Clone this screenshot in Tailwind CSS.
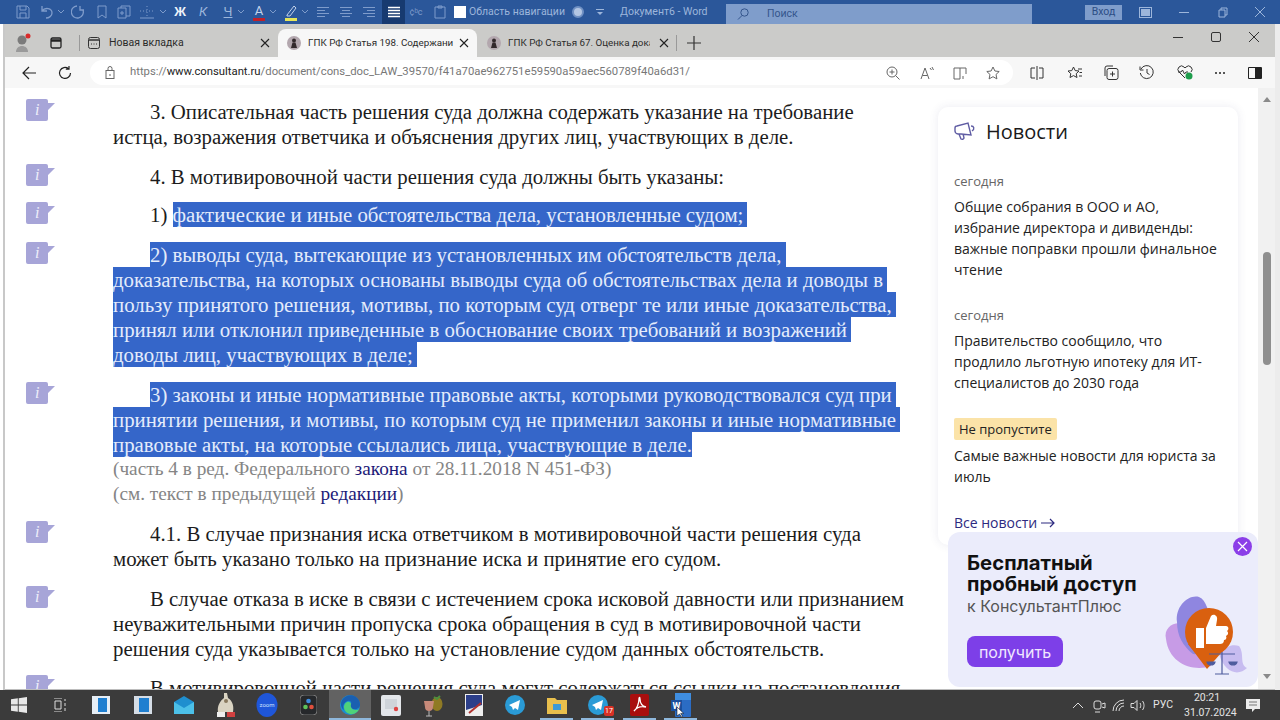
<!DOCTYPE html>
<html lang="ru">
<head>
  <meta charset="UTF-8" />
  <title>ГПК РФ Статья 198</title>
  <script src="https://cdn.jsdelivr.net/npm/@tailwindcss/browser@4"></script>
</head>
<body class="w-[1280px] h-[720px] overflow-hidden bg-[#f0f0f0] flex flex-col font-['Roboto',sans-serif]">

  <!-- Word title bar -->
  <div class="h-[24px] bg-[#2b579a] flex items-center text-[#9db6db] shrink-0 text-[10.5px] whitespace-nowrap">
    <svg class="ml-[16px]" width="14" height="14" viewBox="0 0 14 14" fill="none" stroke="#7f9ccb"><path d="M1 1h10l2 2v10H1zM4 1v4h6V1M4 13V8h6v5"/></svg>
    <svg class="ml-[10px]" width="14" height="14" viewBox="0 0 14 14" fill="none" stroke="#7f9ccb" stroke-width="1.3"><path d="M2 1v5h5M2 6c3-4 10-3 10 2 0 3-3 5-6 5"/></svg>
    <svg class="ml-[4px]" width="6" height="4" viewBox="0 0 6 4" fill="none" stroke="#7f9ccb"><path d="M0 0l3 3 3-3"/></svg>
    <svg class="ml-[7px]" width="14" height="14" viewBox="0 0 14 14" fill="none" stroke="#7f9ccb" stroke-width="1.3"><path d="M9 1v4h4M12 5A6 6 0 1 1 6 1"/></svg>
    <svg class="ml-[12px]" width="10" height="14" viewBox="0 0 10 14" fill="none" stroke="#7f9ccb"><path d="M1 1h8v12l-4-3-4 3z"/></svg>
    <svg class="ml-[10px]" width="14" height="14" viewBox="0 0 14 14" fill="none" stroke="#7f9ccb"><path d="M1 3h8v10H1zM4 3V1h9v10H9M3 8h4M5 6v4"/></svg>
    <svg class="ml-[8px]" width="16" height="14" viewBox="0 0 16 14" fill="none" stroke="#7f9ccb" stroke-dasharray="1 2"><path d="M1 6h14M8 1v10"/><path d="M1 13h14" stroke-dasharray="none"/></svg>
    <svg class="ml-[5px]" width="6" height="4" viewBox="0 0 6 4" fill="none" stroke="#7f9ccb"><path d="M0 0l3 3 3-3"/></svg>
    <span class="ml-[8px] w-[12px] text-center font-bold text-[#eef3fa] text-[13px] font-['Liberation_Sans',sans-serif]">Ж</span>
    <span class="ml-[12px] w-[10px] text-center italic text-[13px] text-[#9db6db]">К</span>
    <span class="ml-[15px] w-[10px] text-center underline text-[13px] text-[#9db6db]">Ч</span>
    <svg class="ml-[5px]" width="6" height="4" viewBox="0 0 6 4" fill="none" stroke="#7f9ccb"><path d="M0 0l3 3 3-3"/></svg>
    <span class="ml-[9px] w-[12px] h-[17px] text-center text-[13px] leading-[14px] text-[#c4d3ea] border-b-[3px] border-[#c0202a]">А</span>
    <svg class="ml-[5px]" width="6" height="4" viewBox="0 0 6 4" fill="none" stroke="#7f9ccb"><path d="M0 0l3 3 3-3"/></svg>
    <svg class="ml-[8px]" width="14" height="17" viewBox="0 0 14 17" fill="none"><path d="M3 11 10 2l2 2-6 8H3z" stroke="#c4d3ea"/><path d="M1 14h12v3H1z" fill="#e6e65a"/></svg>
    <svg class="ml-[4px]" width="6" height="4" viewBox="0 0 6 4" fill="none" stroke="#7f9ccb"><path d="M0 0l3 3 3-3"/></svg>
    <svg class="ml-[9px]" width="12" height="12" viewBox="0 0 12 12" stroke="#7f9ccb"><path d="M0 1.5h12M0 4.5h8M0 7.5h12M0 10.5h8"/></svg>
    <svg class="ml-[11px]" width="12" height="12" viewBox="0 0 12 12" stroke="#7f9ccb"><path d="M0 1.5h12M2 4.5h8M0 7.5h12M2 10.5h8"/></svg>
    <svg class="ml-[11px]" width="12" height="12" viewBox="0 0 12 12" stroke="#7f9ccb"><path d="M0 1.5h12M4 4.5h8M0 7.5h12M4 10.5h8"/></svg>
    <div class="ml-[7px] w-[23px] h-[24px] bg-[#173a70] flex items-center justify-center">
      <svg width="12" height="12" viewBox="0 0 12 12" stroke="#fff" stroke-width="1.3"><path d="M0 1.5h12M0 4.5h12M0 7.5h12M0 10.5h12"/></svg>
    </div>
    <span class="ml-[4px] w-[14px] text-[9px] leading-[8px] text-[#7f9ccb] text-center">¢ᵇc</span>
    <svg class="ml-[11px]" width="12" height="14" viewBox="0 0 12 14" fill="none" stroke="#7f9ccb"><path d="M1 2h10v11H1zM4 1h4v2H4z"/></svg>
    <span class="ml-[8px] w-[12px] h-[12px] bg-white"></span>
    <span class="ml-[3px] w-[90px] text-[#9db6db]">Область навигации</span>
    <span class="ml-[13px] w-[12px] h-[12px] rounded-full bg-[#b3c6e3] border-[2px] border-[#6f90c3]"></span>
    <span class="ml-[12px] w-[8px] h-[6px] border-t border-[#9db6db] flex justify-center pt-[2px]"><svg width="6" height="3" viewBox="0 0 6 3" fill="#9db6db"><path d="M0 0h6L3 3z"/></svg></span>
    <span class="ml-[16px] w-[89px]">Документ6 - Word</span>
    <div class="ml-[17px] w-[306px] h-[20px] mt-[4px] bg-[#7f9dcb] flex items-center pl-[11px] gap-[18px] text-[#34558c]">
      <svg width="12" height="12" viewBox="0 0 12 12" fill="none" stroke="#34558c"><circle cx="7.5" cy="4.5" r="3.7"/><path d="M5 7.5 1 11.5"/></svg>Поиск
    </div>
    <span class="ml-[53px] w-[37px] h-[15px] bg-[#7f9dcb] flex items-center justify-center text-[#2c4d85]">Вход</span>
    <span class="ml-[18px] w-[11px] h-[9px] bg-[#9db6db] border border-[#2b579a] outline outline-[#9db6db]"></span>
    <span class="ml-[28px] w-[10px] border-t border-[#9db6db]"></span>
    <svg class="ml-[29px]" width="10" height="11" viewBox="0 0 10 11" fill="none" stroke="#9db6db"><path d="M1 3h6v7H1zM3 3V1h6v7H7"/></svg>
    <svg class="ml-[27px]" width="10" height="10" viewBox="0 0 10 10" stroke="#9db6db"><path d="M0 0l10 10M10 0 0 10"/></svg>
  </div>

  <div class="flex-1 flex min-h-0">
    <div class="w-[5px] shrink-0 bg-white border-r-[2px] border-[#c8c8c8]"></div>

    <!-- Browser window -->
    <div class="w-[1270px] flex flex-col bg-white">

      <!-- Tab strip -->
      <div class="h-[33px] bg-[#cbcbc9] flex items-center shrink-0 text-[#2b2b2b] text-[10.5px] whitespace-nowrap pt-[5px]">
        <svg class="ml-[10px]" width="18" height="20" viewBox="0 0 18 20"><circle cx="7" cy="7" r="4.5" fill="#7b7b7b"/><path d="M1 19c0-8 12-8 12 0z" fill="#9a9a9a"/><circle cx="13" cy="3" r="2.5" fill="#d92b2b"/></svg>
        <svg class="ml-[17px]" width="12" height="12" viewBox="0 0 12 12" fill="none" stroke="#222" stroke-width="1.3"><rect x="1" y="1" width="10" height="10" rx="1.5"/><path d="M1 3.5h10" stroke-width="2.5"/></svg>
        <span class="ml-[17px] w-px h-[16px] bg-[#999]"></span>
        <svg class="ml-[8px]" width="12" height="12" viewBox="0 0 12 12" fill="none" stroke="#333"><rect x=".5" y=".5" width="11" height="11" rx="2"/><path d="M1 3h10" stroke-width="1.5"/><path d="M3 7h6" stroke-dasharray="1 1.5"/></svg>
        <span class="ml-[9px] w-[150px]">Новая вкладка</span>
        <svg class="ml-[1px]" width="10" height="10" viewBox="0 0 10 10" stroke="#222" stroke-width="1.1"><path d="M1 1l8 8M9 1 1 9"/></svg>

        <!-- active tab -->
        <div class="ml-[8px] w-[199px] h-[28px] bg-[#f7f7f7] rounded-t-[8px] flex items-center pl-[9px]">
          <svg width="14" height="14" viewBox="0 0 14 14"><circle cx="7" cy="7" r="7" fill="#b3a7ae"/><circle cx="7" cy="4.500" r="2" fill="#33292c"/><path d="M4 12l1.500-5.500h3L10 12z" fill="#33292c"/></svg>
          <span class="ml-[7px] w-[145px] overflow-hidden text-[9.8px]">ГПК РФ Статья 198. Содержани</span>
          <svg class="ml-[6px]" width="10" height="10" viewBox="0 0 10 10" stroke="#222" stroke-width="1.1"><path d="M1 1l8 8M9 1 1 9"/></svg>
        </div>

        <svg class="ml-[10px]" width="14" height="14" viewBox="0 0 14 14"><circle cx="7" cy="7" r="7" fill="#b3a7ae"/><circle cx="7" cy="4.500" r="2" fill="#33292c"/><path d="M4 12l1.500-5.500h3L10 12z" fill="#33292c"/></svg>
        <span class="ml-[7px] w-[142px] overflow-hidden text-[9.8px]">ГПК РФ Статья 67. Оценка дока</span>
        <svg class="ml-[9px]" width="10" height="10" viewBox="0 0 10 10" stroke="#222" stroke-width="1.1"><path d="M1 1l8 8M9 1 1 9"/></svg>
        <span class="ml-[7px] w-px h-[16px] bg-[#999]"></span>
        <svg class="ml-[10px]" width="14" height="14" viewBox="0 0 14 14" stroke="#333" stroke-width="1.2"><path d="M7 0v14M0 7h14"/></svg>
        <div class="flex-1"></div>
        <div class="flex items-center pr-[16px] -mt-[12px]">
          <span class="w-[10px] border-t border-[#333]"></span>
          <span class="ml-[28px] w-[10px] h-[10px] border border-[#333] rounded-[2px]"></span>
          <svg class="ml-[28px]" width="10" height="10" viewBox="0 0 10 10" stroke="#333"><path d="M0 0l10 10M10 0 0 10"/></svg>
        </div>
      </div>

      <!-- Address bar -->
      <div class="h-[31px] bg-[#f7f7f7] flex items-center shrink-0">
        <svg class="ml-[17px]" width="14" height="14" viewBox="0 0 14 14" fill="none" stroke="#222" stroke-width="1.2"><path d="M14 7H1M7 1 1 7l6 6"/></svg>
        <svg class="ml-[22px]" width="14" height="14" viewBox="0 0 14 14" fill="none" stroke="#222" stroke-width="1.2"><path d="M12.5 7A5.5 5.5 0 1 1 10.5 2.7M11 0v3.2H7.8"/></svg>
        <div class="ml-[18px] w-[923px] h-[25px] bg-white rounded-full flex items-center pl-[15px] pr-[13px] whitespace-nowrap">
          <svg width="10" height="13" viewBox="0 0 10 13" fill="none" stroke="#666"><rect x="1" y="4.5" width="8" height="8"/><path d="M3 4.5V2.5a2 2 0 0 1 4 0v2M5 8v2"/></svg>
          <span class="ml-[15px] flex-1 text-[11.3px] text-[#777]">https://<span class="text-[#222]">www.consultant.ru</span>/document/cons_doc_LAW_39570/f41a70ae962751e59590a59aec560789f40a6d31/</span>
          <svg width="14" height="14" viewBox="0 0 14 14" fill="none" stroke="#666"><circle cx="6" cy="6" r="5"/><path d="M9.5 9.5 13.5 13.5M3.5 6h5M6 3.5v5"/></svg>
          <svg class="ml-[20px]" width="14" height="14" viewBox="0 0 14 14" fill="none" stroke="#666"><path d="M1 13 5 2l4 11M2.5 9.5h5M10 2l1.5 2M12 1l1.5 3"/></svg>
          <svg class="ml-[19px]" width="14" height="14" viewBox="0 0 14 14" fill="none" stroke="#666"><path d="M7 2H1v11h6zM7 2h6v6M10 10v3"/></svg>
          <svg class="ml-[19px]" width="14" height="14" viewBox="0 0 14 14" fill="none" stroke="#666"><path d="M7 1l1.9 4 4.3.5-3.2 3 .9 4.4L7 10.7l-3.9 2.2.9-4.4-3.2-3L5.100 5z"/></svg>
        </div>
        <svg class="ml-[17px]" width="14" height="14" viewBox="0 0 14 14" fill="none" stroke="#333"><path d="M7 0v14M5 2H1v10h4M9 2h4v10H9"/></svg>
        <svg class="ml-[23px]" width="16" height="14" viewBox="0 0 16 14" fill="none" stroke="#333"><path d="M6.500 1l1.700 3.600 3.800.4-2.800 2.700.8 3.800-3.500-1.900L3 11.500l.8-3.800L1 5l3.800-.4zM11 3h4M12.500 6.500H15M12 10h3"/></svg>
        <svg class="ml-[20px]" width="16" height="15" viewBox="0 0 16 15" fill="none" stroke="#333"><path d="M2 11V3a2 2 0 0 1 2-2h6"/><rect x="4" y="3.500" width="11" height="11" rx="2"/><path d="M9.500 6.500v5M7 9h5"/></svg>
        <svg class="ml-[20px]" width="16" height="15" viewBox="0 0 16 15" fill="none" stroke="#333"><path d="M2 4a6.500 6.500 0 1 1-.7 4M1 1.500V5h3.500M8 4v4l2.500 1.500"/></svg>
        <svg class="ml-[22px]" width="16" height="15" viewBox="0 0 16 15"><path d="M8 13 2 7a3.400 3.400 0 0 1 5-5l1 1 1-1a3.400 3.400 0 0 1 5 5M1 7h3l1.500-2 2 4L9 7h2" fill="none" stroke="#333"/><circle cx="12" cy="11" r="3.500" fill="#1f9d4d"/></svg>
        <span class="ml-[20px] w-[14px] flex gap-[2px] justify-center"><i class="w-[2px] h-[2px] bg-[#222] rounded-full"></i><i class="w-[2px] h-[2px] bg-[#222] rounded-full"></i><i class="w-[2px] h-[2px] bg-[#222] rounded-full"></i></span>
        <span class="ml-[21px] w-[14px] h-[12px] border border-[#222] border-r-[7px] rounded-[1px]"></span>
      </div>

      <!-- Page -->
      <div class="flex-1 min-h-0 flex overflow-hidden relative">

        <!-- Article -->
        <div class="w-[933px] shrink-0 pl-[21px] pt-[11px] font-['Liberation_Serif',serif] text-[20.8px] leading-[25px] text-[#1c1c1c] whitespace-nowrap overflow-hidden">
          <div class="flex">
            <svg class="w-[87px] h-[22px] shrink-0" viewBox="0 0 87 22"><path d="M2 0h18a2 2 0 0 1 2 2v2h7l-7 7v9a2 2 0 0 1-2 2H2a2 2 0 0 1-2-2V2a2 2 0 0 1 2-2z" fill="#a7a5d8"/><text x="9" y="16" fill="#eeeefa" font-family="Liberation Serif" font-style="italic" font-size="16">i</text></svg>
            <div>
              <div class="pl-[37px]">3. Описательная часть решения суда должна содержать указание на требование</div>
              <div>истца, возражения ответчика и объяснения других лиц, участвующих в деле.</div>
            </div>
          </div>
          <div class="flex mt-[15px]">
            <svg class="w-[87px] h-[22px] shrink-0" viewBox="0 0 87 22"><path d="M2 0h18a2 2 0 0 1 2 2v2h7l-7 7v9a2 2 0 0 1-2 2H2a2 2 0 0 1-2-2V2a2 2 0 0 1 2-2z" fill="#a7a5d8"/><text x="9" y="16" fill="#eeeefa" font-family="Liberation Serif" font-style="italic" font-size="16">i</text></svg>
            <div class="pl-[37px]">4. В мотивировочной части решения суда должны быть указаны:</div>
          </div>
          <div class="flex mt-[13px]">
            <svg class="w-[87px] h-[22px] shrink-0" viewBox="0 0 87 22"><path d="M2 0h18a2 2 0 0 1 2 2v2h7l-7 7v9a2 2 0 0 1-2 2H2a2 2 0 0 1-2-2V2a2 2 0 0 1 2-2z" fill="#a7a5d8"/><text x="9" y="16" fill="#eeeefa" font-family="Liberation Serif" font-style="italic" font-size="16">i</text></svg>
            <div class="pl-[37px] flex">1)&nbsp;<span class="block bg-[#3566c9] text-[#e4ecfb] pr-[4px]">фактические и иные обстоятельства дела, установленные судом;</span></div>
          </div>
          <div class="flex mt-[15px]">
            <svg class="w-[87px] h-[22px] shrink-0" viewBox="0 0 87 22"><path d="M2 0h18a2 2 0 0 1 2 2v2h7l-7 7v9a2 2 0 0 1-2 2H2a2 2 0 0 1-2-2V2a2 2 0 0 1 2-2z" fill="#a7a5d8"/><text x="9" y="16" fill="#eeeefa" font-family="Liberation Serif" font-style="italic" font-size="16">i</text></svg>
            <div class="text-[#e4ecfb]">
              <div class="ml-[37px] w-fit bg-[#3566c9] pr-[4px]">2) выводы суда, вытекающие из установленных им обстоятельств дела,</div>
              <div class="w-fit bg-[#3566c9] pr-[4px]">доказательства, на которых основаны выводы суда об обстоятельствах дела и доводы в</div>
              <div class="w-fit bg-[#3566c9] pr-[4px]">пользу принятого решения, мотивы, по которым суд отверг те или иные доказательства,</div>
              <div class="w-fit bg-[#3566c9] pr-[4px]">принял или отклонил приведенные в обоснование своих требований и возражений</div>
              <div class="w-fit bg-[#3566c9] pr-[4px]">доводы лиц, участвующих в деле;</div>
            </div>
          </div>
          <div class="flex mt-[15px]">
            <svg class="w-[87px] h-[22px] shrink-0" viewBox="0 0 87 22"><path d="M2 0h18a2 2 0 0 1 2 2v2h7l-7 7v9a2 2 0 0 1-2 2H2a2 2 0 0 1-2-2V2a2 2 0 0 1 2-2z" fill="#a7a5d8"/><text x="9" y="16" fill="#eeeefa" font-family="Liberation Serif" font-style="italic" font-size="16">i</text></svg>
            <div class="text-[#e4ecfb]">
              <div class="ml-[37px] w-fit bg-[#3566c9] pr-[4px]">3) законы и иные нормативные правовые акты, которыми руководствовался суд при</div>
              <div class="w-fit bg-[#3566c9] pr-[4px]">принятии решения, и мотивы, по которым суд не применил законы и иные нормативные</div>
              <div class="w-fit bg-[#3566c9]">правовые акты, на которые ссылались лица, участвующие в деле.</div>
            </div>
          </div>
          <div class="-mt-px pl-[87px] text-[#858585] text-[19.3px]">
            <div>(часть 4 в ред. Федерального <span class="text-[#1d1a78]">закона</span> от 28.11.2018 N 451-ФЗ)</div>
            <div>(см. текст в предыдущей <span class="text-[#1d1a78]">редакции</span>)</div>
          </div>
          <div class="flex mt-[15px]">
            <svg class="w-[87px] h-[22px] shrink-0" viewBox="0 0 87 22"><path d="M2 0h18a2 2 0 0 1 2 2v2h7l-7 7v9a2 2 0 0 1-2 2H2a2 2 0 0 1-2-2V2a2 2 0 0 1 2-2z" fill="#a7a5d8"/><text x="9" y="16" fill="#eeeefa" font-family="Liberation Serif" font-style="italic" font-size="16">i</text></svg>
            <div>
              <div class="pl-[37px]">4.1. В случае признания иска ответчиком в мотивировочной части решения суда</div>
              <div>может быть указано только на признание иска и принятие его судом.</div>
            </div>
          </div>
          <div class="flex mt-[15px]">
            <svg class="w-[87px] h-[22px] shrink-0" viewBox="0 0 87 22"><path d="M2 0h18a2 2 0 0 1 2 2v2h7l-7 7v9a2 2 0 0 1-2 2H2a2 2 0 0 1-2-2V2a2 2 0 0 1 2-2z" fill="#a7a5d8"/><text x="9" y="16" fill="#eeeefa" font-family="Liberation Serif" font-style="italic" font-size="16">i</text></svg>
            <div>
              <div class="pl-[37px]">В случае отказа в иске в связи с истечением срока исковой давности или признанием</div>
              <div>неуважительными причин пропуска срока обращения в суд в мотивировочной части</div>
              <div>решения суда указывается только на установление судом данных обстоятельств.</div>
            </div>
          </div>
          <div class="flex mt-[14px]">
            <svg class="w-[87px] h-[22px] shrink-0" viewBox="0 0 87 22"><path d="M2 0h18a2 2 0 0 1 2 2v2h7l-7 7v9a2 2 0 0 1-2 2H2a2 2 0 0 1-2-2V2a2 2 0 0 1 2-2z" fill="#a7a5d8"/><text x="9" y="16" fill="#eeeefa" font-family="Liberation Serif" font-style="italic" font-size="16">i</text></svg>
            <div class="pl-[37px]">В мотивировочной части решения суда могут содержаться ссылки на постановления</div>
          </div>
        </div>

        <!-- News -->
        <aside class="w-[300px] shrink-0 mt-[19px] self-start bg-white rounded-[10px] shadow-[0_0_10px_rgba(60,60,120,0.10)] pl-[16px] pr-[12px] pt-[10px] pb-[12px] font-['Open_Sans',sans-serif] text-[14px] leading-[21px] text-[#222]">
          <div class="flex items-center gap-[10px] h-[28px]">
            <svg width="22" height="19" viewBox="0 0 22 19" fill="none" stroke="#5f5ca3" stroke-width="1.4"><path d="M1 6c0-1 1-2 2-2l11-3 3 12-10-1H4C2 12 1 10 1 9zM17 4c3 0 4 3 1 5M5 12l2 5a2 2 0 0 0 3-1l-1-4"/></svg>
            <span class="text-[20px] text-[#1a1a1a]">Новости</span>
          </div>
          <div class="mt-[27px] text-[13px] leading-[18px] text-[#666]">сегодня</div>
          <div class="mt-[6px]">Общие собрания в ООО и АО, избрание директора и дивиденды: важные поправки прошли финальное чтение</div>
          <div class="mt-[26px] text-[13px] leading-[18px] text-[#666]">сегодня</div>
          <div class="mt-[6px]">Правительство сообщило, что продлило льготную ипотеку для ИТ-специалистов до 2030 года</div>
          <div class="mt-[25px] w-fit h-[22px] px-[5px] rounded-[2px] bg-[#fbe3a8] text-[13px] leading-[22px]">Не пропустите</div>
          <div class="mt-[5px]">Самые важные новости для юриста за июль</div>
          <div class="mt-[25px] flex items-center gap-[4px] text-[#2d2a80]">Все новости
            <svg width="14" height="10" viewBox="0 0 14 10" fill="none" stroke="#2d2a80" stroke-width="1.2"><path d="M0 5h13M9 1l4 4-4 4"/></svg>
          </div>
        </aside>

        <!-- Scrollbar -->
        <div class="ml-[20px] w-[17px] shrink-0 bg-[#f1f1f1] flex flex-col items-center relative">
          <svg class="mt-[9px]" width="8" height="5" viewBox="0 0 8 5" fill="#8a8a8a"><path d="M0 5h8L4 0z"/></svg>
          <div class="mt-[150px] w-[8px] h-[113px] rounded-full bg-[#8f8f8f]"></div>
          <svg class="mt-auto mb-[10px]" width="8" height="5" viewBox="0 0 8 5" fill="#8a8a8a"><path d="M0 0h8L4 5z"/></svg>
        </div>

        <!-- Trial popup -->
        <div class="absolute left-[943px] top-[444px] w-[310px] h-[155px] bg-[#ebecfb] rounded-[12px] pl-[19px] pt-[20px] font-['Inter',sans-serif]">
          <div class="text-[20.3px] leading-[21px] font-bold text-[#111]">Бесплатный<br>пробный доступ</div>
          <div class="text-[16px] leading-[24px] text-[#555]">к КонсультантПлюс</div>
          <div class="mt-[18px] w-[96px] h-[31px] rounded-[8px] bg-[#7d3fe8] text-[#f0e8ff] text-[16px] flex items-center justify-center">получить</div>
          <svg class="absolute left-[285px] top-[5px]" width="19" height="19" viewBox="0 0 19 19"><circle cx="9.500" cy="9.500" r="9.500" fill="#8b3ee8"/><path d="M5 5l9 9M14 5l-9 9" stroke="#fff" stroke-width="1.2"/></svg>
          <svg class="absolute left-[215px] top-[62px]" width="90" height="85" viewBox="0 0 90 85">
            <path d="M3 45C0 32 14 26 22 31 30 30 50 60 48 72 30 78 6 70 3 45z" fill="#c79be6"/>
            <path d="M14 28C12 12 26 0 36 3c8 3 8 15 14 21 6 16-10 38-20 36C20 52 14 42 14 28z" fill="#8f86e0"/>
            <path d="M56 60c6-8 14-10 20-8 6 8 0 18 8 22-8 8-22 6-28-14z" fill="#c7bcf0"/>
            <circle cx="46" cy="38" r="24" fill="#d9600f"/>
            <path d="M25 50 44 75 66 50z" fill="#d9600f"/>
            <path d="M33 34h8v20h-8zM43 34l5-12c3-3 7 0 6 4l-1 6h10c3 0 3 4 1 5 2 2 1 4-1 5 1 2 0 4-2 4 0 3-2 4-4 4H43z" fill="#fff"/>
            <path d="M59 58v22M46 60h26M52 80h14M44 68c1 4 7 4 8 0zM66 68c1 4 7 4 8 0z" stroke="#4f5c9e" stroke-width="1.200" fill="#4f5c9e"/>
          </svg>
        </div>
      </div>
      <div class="h-px bg-[#bdbdbd] shrink-0"></div>
    </div>
    <div class="flex-1 bg-[#ececec]"></div>
  </div>

  <!-- Taskbar -->
  <div class="h-[30px] bg-[#3b3b3b] shrink-0 flex items-center text-[#e4e4e4] whitespace-nowrap">
    <div class="flex -ml-[2px]">
      <div class="w-[41.400px] h-[30px] flex items-center justify-center"><svg width="16" height="16" viewBox="0 0 16 16" fill="#e8e8e8"><path d="M0 2.300 6.800 1.300V7.600H0zM7.700 1.200 16 0v7.600H7.700zM0 8.400h6.800v6.300L0 13.700zM7.700 8.400H16V16l-8.300-1.200z"/></svg></div>
      <div class="w-[41.400px] h-[30px] flex items-center justify-center"><svg width="14" height="14" viewBox="0 0 14 14" fill="none" stroke="#ddd"><path d="M1 0h8M2 3h6v8H2zM1 14h8M12 1v2M12 5v3M12 10v3"/></svg></div>
      <div class="w-[41.400px] h-[30px] flex items-center justify-center"><svg width="18" height="18" viewBox="0 0 18 18"><rect width="18" height="18" fill="#e6eef6"/><rect x="6" y="2" width="9" height="14" fill="#1f7fd0"/></svg></div>
      <div class="w-[41.400px] h-[30px] flex items-center justify-center"><svg width="18" height="18" viewBox="0 0 18 18"><rect width="18" height="18" fill="#d5dde6"/><rect x="5" y="2" width="10" height="14" fill="#1f7fd0"/></svg></div>
      <div class="w-[41.400px] h-[30px] flex items-center justify-center"><svg width="20" height="18" viewBox="0 0 20 18"><path d="M0 6 10 0l10 6v12H0z" fill="#1f8fcf"/><path d="M0 6l10 6 10-6v12H0z" fill="#4cc0e8"/></svg></div>
      <div class="w-[41.400px] h-[30px] flex items-center justify-center"><svg width="20" height="24" viewBox="0 0 20 24"><path d="M8 0h3l1 5c5 3 6 9 5 14H2C1 13 4 8 8 5z" fill="#d9d3c2"/><circle cx="10" cy="8" r="2" fill="#8a7a5f"/><rect x="1" y="19" width="8" height="5" fill="#eee"/><rect x="11" y="19" width="8" height="5" fill="#d04040"/></svg></div>
      <div class="w-[41.400px] h-[30px] flex items-center justify-center"><svg width="22" height="24" viewBox="0 0 22 24"><ellipse cx="11" cy="12" rx="10.500" ry="12" fill="#1f56d9"/><text x="11" y="14" text-anchor="middle" fill="#cfe0ff" font-size="6" font-family="Roboto">zoom</text></svg></div>
      <div class="w-[41.400px] h-[30px] flex items-center justify-center"><svg width="17" height="20" viewBox="0 0 17 20"><rect width="17" height="20" rx="4" fill="#26282b" stroke="#777"/><circle cx="8.500" cy="6" r="2.300" fill="#3d8de0"/><circle cx="5.500" cy="12" r="2.300" fill="#5fc45a"/><circle cx="11.500" cy="12" r="2.300" fill="#e0503d"/></svg></div>
      <div class="relative w-[41.400px] h-[30px] bg-[#626262] flex items-center justify-center">
        <svg width="20" height="20" viewBox="0 0 20 20"><circle cx="10" cy="10" r="10" fill="#1b8fd0"/><path d="M20 10c0 3-4 5-7 4-2-1-3-3-2-5 1-2-1-4-3-3C4 7 2 11 4 15 1 13 0 9 2 5c3-5 10-6 14-3 3 2 4 5 4 8z" fill="#1a5fb0"/><path d="M11 9c-1 3 1 6 5 6 1 0 2 0 3-1-1 3-5 6-9 5-4-1-6-4-6-7 0-3 3-6 5-5 1 0 2 1 2 2z" fill="#4fd27a"/></svg>
        <span class="absolute bottom-0 left-0 right-0 h-[2px] bg-[#8fb8dc]"></span>
      </div>
      <div class="w-[41.400px] h-[30px] flex items-center justify-center"><svg width="20" height="21" viewBox="0 0 20 21"><rect width="20" height="21" rx="2" fill="#e3e6ea"/><rect x="4" y="4" width="12" height="10" fill="#cfd4da"/><circle cx="15" cy="14" r="2.200" fill="#d44"/></svg></div>
      <div class="w-[41.400px] h-[30px] flex items-center justify-center"><svg width="22" height="24" viewBox="0 0 22 24"><ellipse cx="15" cy="11" rx="5.500" ry="7" fill="#8f7a24"/><path d="M12 4l3 2 3-3" stroke="#4d8f3d" stroke-width="2" fill="none"/><path d="M2 8h10l-1 6a4 4 0 0 1-8 0z" fill="#c78a7a"/><path d="M7 18v5M4 23h6" stroke="#bbb"/></svg></div>
      <div class="w-[41.400px] h-[30px] flex items-center justify-center"><svg width="18" height="22" viewBox="0 0 18 22"><rect width="18" height="22" fill="#eee"/><path d="M1 1h16v10L1 16z" fill="#2c3f8a"/><path d="M4 19 16 9" stroke="#b0332f" stroke-width="2"/></svg></div>
      <div class="relative w-[41.400px] h-[30px] flex items-center justify-center"><svg width="20" height="20" viewBox="0 0 20 20"><circle cx="10" cy="10" r="10" fill="#2a9bd6"/><path d="M4 10l11-5-2 10-3-2-2 2-1-3z" fill="#fff"/></svg></div>
      <div class="relative w-[41.400px] h-[30px] flex items-center justify-center"><svg width="20" height="18" viewBox="0 0 20 18"><path d="M0 2h8l2 2h10v14H0z" fill="#e8bf4d"/><rect x="6" y="8" width="8" height="6" fill="#3c9ad6"/></svg><span class="absolute bottom-0 left-[4px] w-[33px] h-[2px] bg-[#8fb8dc]"></span></div>
      <div class="relative w-[41.400px] h-[30px] flex items-center justify-center"><svg width="20" height="20" viewBox="0 0 20 20"><circle cx="10" cy="10" r="10" fill="#2a9bd6"/><path d="M4 10l11-5-2 10-3-2-2 2-1-3z" fill="#fff"/></svg><span class="absolute right-[5px] top-[16px] px-[1px] rounded-[2px] bg-[#d93025] text-white text-[7px] leading-[10px]">17</span><span class="absolute bottom-0 left-[4px] w-[33px] h-[2px] bg-[#8fb8dc]"></span></div>
      <div class="relative w-[41.400px] h-[30px] flex items-center justify-center"><svg width="19" height="22" viewBox="0 0 19 22"><rect width="19" height="22" rx="2" fill="#a80e0e"/><path d="M4 17c3-2 5-8 5-12 0-2 1-2 1 0 0 4 2 7 6 8-4-1-9 0-12 4z" fill="none" stroke="#fff" stroke-width="1.300"/></svg><span class="absolute bottom-0 left-[4px] w-[33px] h-[2px] bg-[#8fb8dc]"></span></div>
      <div class="relative w-[41.400px] h-[30px] flex items-center justify-center"><svg width="20" height="24" viewBox="0 0 20 24"><rect x="4" y="0" width="16" height="24" rx="1" fill="#2b6cc4"/><rect x="4" y="0" width="16" height="7" fill="#3f8ee0"/><rect x="0" y="7" width="11" height="11" fill="#1b4f9c"/><text x="5.500" y="16" text-anchor="middle" fill="#fff" font-size="9" font-weight="bold" font-family="Roboto">W</text><path d="M6 14v9l2.500-2 2 3 1-.6-1.800-3h3z" fill="#fff" stroke="#000" stroke-width=".5"/></svg><span class="absolute bottom-0 left-[4px] w-[33px] h-[2px] bg-[#8fb8dc]"></span></div>
    </div>
    <div class="flex-1"></div>
    <svg width="12" height="7" viewBox="0 0 12 7" fill="none" stroke="#ddd"><path d="M1 6l5-5 5 5"/></svg>
    <svg class="ml-[8px]" width="14" height="15" viewBox="0 0 14 15" fill="none" stroke="#ddd"><rect x="2" y="3" width="7" height="8" rx="2"/><path d="M10 6l3-1v5l-3-1M3 14h5"/></svg>
    <svg class="ml-[6px]" width="13" height="13" viewBox="0 0 13 13" fill="none" stroke="#ddd"><path d="M1 12a11 11 0 0 1 11-11M4 12a8 8 0 0 1 8-8M7 12a5 5 0 0 1 5-5"/></svg>
    <svg class="ml-[5px]" width="15" height="13" viewBox="0 0 15 13" fill="none" stroke="#ddd"><path d="M1 4.500h3L7 1.500v10l-3-3H1zM10 4c1 1.500 1 3.500 0 5M12.500 2c2 2.500 2 6.500 0 9"/></svg>
    <span class="ml-[6px] w-[24px] text-[10.500px] text-center">РУС</span>
    <div class="ml-[9px] w-[46px] text-center text-[10.500px] leading-[15px]"><div>20:21</div><div>31.07.2024</div></div>
    <svg class="ml-[16px] mr-[20px]" width="14" height="13" viewBox="0 0 14 13"><path d="M0 0h14v10H9l-3 3v-3H0z" fill="#ececec"/><path d="M3 3h8M3 6h8" stroke="#777"/></svg>
  </div>
</body>
</html>
